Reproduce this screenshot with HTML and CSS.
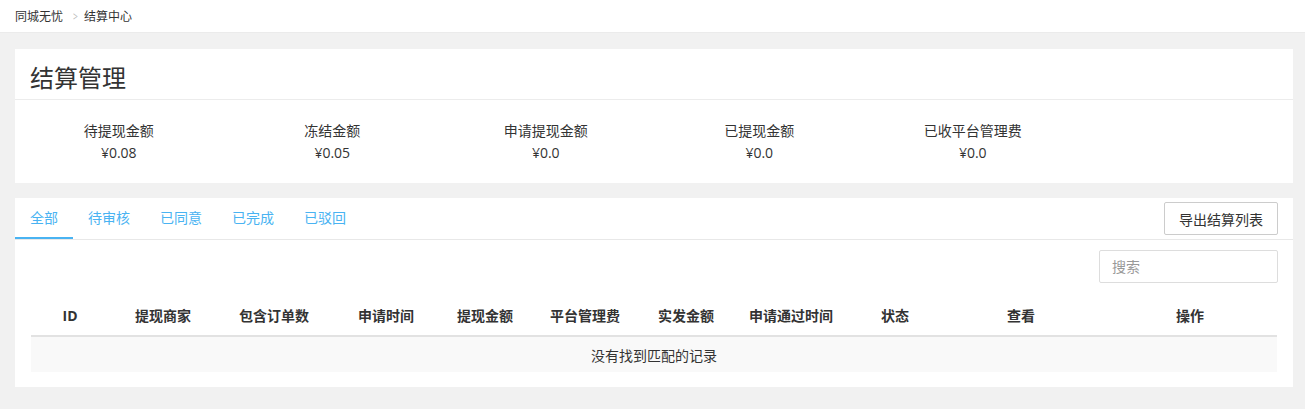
FILE: index.html
```html
<!DOCTYPE html>
<html lang="zh-CN">
<head>
    <meta charset="UTF-8">
    <title>结算中心</title>
    <link rel="stylesheet" href="styles.css">
</head>
<body>
    <div class="breadcrumb">
        <span>同城无忧</span>
        <span class="sep">&gt;</span>
        <span>结算中心</span>
    </div>

    <div class="panel">
        <div class="panel-heading">结算管理</div>
        <div class="stats">
            <div class="stat">
                <div class="stat-label">待提现金额</div>
                <div class="stat-value">¥0.08</div>
            </div>
            <div class="stat">
                <div class="stat-label">冻结金额</div>
                <div class="stat-value">¥0.05</div>
            </div>
            <div class="stat">
                <div class="stat-label">申请提现金额</div>
                <div class="stat-value">¥0.0</div>
            </div>
            <div class="stat">
                <div class="stat-label">已提现金额</div>
                <div class="stat-value">¥0.0</div>
            </div>
            <div class="stat">
                <div class="stat-label">已收平台管理费</div>
                <div class="stat-value">¥0.0</div>
            </div>
        </div>
    </div>

    <div class="panel">
        <div class="tab-bar">
            <ul class="tabs">
                <li class="active">全部</li>
                <li>待审核</li>
                <li>已同意</li>
                <li>已完成</li>
                <li>已驳回</li>
            </ul>
            <button class="btn-export">导出结算列表</button>
        </div>
        <div class="panel-body">
            <div class="toolbar">
                <input type="text" class="search" placeholder="搜索">
            </div>
            <table class="list">
                <colgroup>
                    <col class="c-id">
                    <col class="c-shop">
                    <col class="c-orders">
                    <col class="c-time">
                    <col class="c-amount">
                    <col class="c-fee">
                    <col class="c-paid">
                    <col class="c-pass">
                    <col class="c-state">
                    <col class="c-view">
                    <col class="c-op">
                </colgroup>
                <thead>
                    <tr>
                        <th>ID</th>
                        <th>提现商家</th>
                        <th>包含订单数</th>
                        <th>申请时间</th>
                        <th>提现金额</th>
                        <th>平台管理费</th>
                        <th>实发金额</th>
                        <th>申请通过时间</th>
                        <th>状态</th>
                        <th>查看</th>
                        <th>操作</th>
                    </tr>
                </thead>
                <tbody>
                    <tr class="no-records">
                        <td colspan="11">没有找到匹配的记录</td>
                    </tr>
                </tbody>
            </table>
        </div>
    </div>
</body>
</html>
```

FILE: styles.css
```css
body {
    font-family: "Open Sans", "Noto Sans CJK SC", sans-serif;
    margin: 0;
    padding: 0;
    background: #f1f1f1;
    color: #333;
    font-size: 14px;
}

.breadcrumb {
    height: 33px;
    background: #fff;
    border-bottom: 1px solid #ebebeb;
    box-sizing: border-box;
    display: flex;
    align-items: center;
    padding: 0 15px;
    font-size: 12px;
    color: #333;
}

.breadcrumb .sep {
    color: #bbb;
    margin: 0 5px 0 9px;
    font-size: 12px;
    transform: scaleX(0.7);
}

.panel {
    background: #fff;
    margin: 16px 12px 0 15px;
}

.panel + .panel {
    margin-top: 15px;
}

.panel-heading {
    font-size: 24px;
    line-height: 30px;
    padding: 14px 15px 6px;
    border-bottom: 1px solid #ececec;
    color: #333;
}

.stats {
    display: grid;
    grid-template-columns: repeat(6, 1fr);
    padding: 21px 0 20px;
    margin-left: -3px;
}

.stat {
    text-align: center;
}

.stat-label,
.stat-value {
    line-height: 20px;
    font-size: 14px;
}

.stat-value {
    margin-top: 2px;
}

.tab-bar {
    display: flex;
    align-items: center;
    justify-content: space-between;
    border-bottom: 1px solid #e8e8e8;
    padding-right: 15px;
}

.tabs {
    list-style: none;
    margin: 0;
    padding: 0;
    display: flex;
}

.tabs li {
    padding: 0 15px;
    height: 41px;
    line-height: 40px;
    box-sizing: border-box;
    color: #49b3f2;
    font-size: 14px;
    cursor: pointer;
}

.tabs li.active {
    border-bottom: 2px solid #49b3f2;
}

.btn-export {
    font-family: inherit;
    font-size: 14px;
    color: #333;
    background: #fff;
    border: 1px solid #ccc;
    border-radius: 2px;
    width: 114px;
    height: 33px;
    padding: 0;
    cursor: pointer;
}

.panel-body {
    padding: 10px 15px 15px 16px;
}

.toolbar {
    display: flex;
    justify-content: flex-end;
    margin-bottom: 12px;
}

.search {
    width: 179px;
    height: 33px;
    box-sizing: border-box;
    border: 1px solid #ddd;
    border-radius: 2px;
    padding: 0 12px;
    font-family: inherit;
    font-size: 14px;
    color: #333;
    outline: none;
}

.search::placeholder {
    color: #999;
}

.list {
    width: 1246px;
    border-collapse: collapse;
    table-layout: fixed;
}

.c-id { width: 78px; }
.c-shop { width: 108px; }
.c-orders { width: 114px; }
.c-time { width: 110px; }
.c-amount { width: 88px; }
.c-fee { width: 112px; }
.c-paid { width: 90px; }
.c-pass { width: 120px; }
.c-state { width: 88px; }
.c-view { width: 164px; }
.c-op { width: 174px; }

.list th {
    height: 40px;
    font-weight: bold;
    font-size: 14px;
    text-align: center;
    color: #333;
    border-bottom: 2px solid #e2e2e2;
    padding: 0;
}

.no-records td {
    background: #f9f9f9;
    height: 35px;
    text-align: center;
    font-size: 14px;
    color: #333;
    padding: 0;
}
```
